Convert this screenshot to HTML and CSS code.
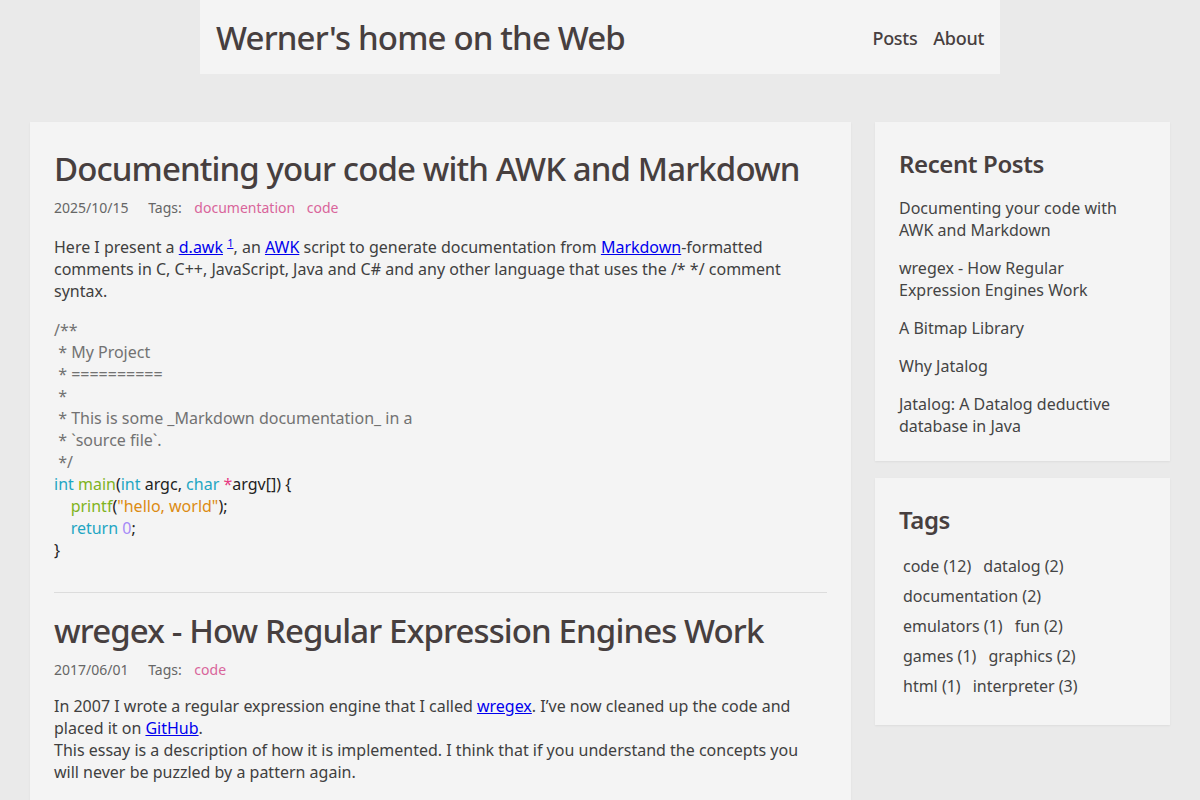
FILE: index.html
```html
<!DOCTYPE html>
<html lang="en">
<head>
  <meta charset="UTF-8">
  <title>Werner's home on the Web</title>
  <link rel="stylesheet" href="styles.css">
</head>
<body>
<header class="site-header">
  <a href="/" class="site-title">Werner's home on the Web</a>
  <nav class="site-nav">
    <a href="/posts">Posts</a>
    <a href="/about">About</a>
  </nav>
</header>

<div class="layout">
  <main class="card posts">
    <article class="post">
      <h1>Documenting your code with AWK and Markdown</h1>
      <div class="meta">
        <span class="date">2025/10/15</span>
        <span class="tags-label">Tags:</span>
        <a href="#" class="tag">documentation</a>
        <a href="#" class="tag">code</a>
      </div>
      <p>Here I present a <a href="#">d.awk</a> <sup><a href="#">1</a></sup>, an <a href="#">AWK</a> script to generate documentation from <a href="#">Markdown</a>-formatted comments in C, C++, JavaScript, Java and C# and any other language that uses the /* */ comment syntax.</p>
<pre class="code"><span class="c">/**
 * My Project
 * ==========
 *
 * This is some _Markdown documentation_ in a
 * `source file`.
 */</span>
<span class="k">int</span> <span class="f">main</span>(<span class="k">int</span> argc, <span class="k">char</span> <span class="o">*</span>argv[]) {
    <span class="f">printf</span>(<span class="s">"hello, world"</span>);
    <span class="k">return</span> <span class="n">0</span>;
}</pre>
    </article>
    <hr>
    <article class="post">
      <h1>wregex - How Regular Expression Engines Work</h1>
      <div class="meta">
        <span class="date">2017/06/01</span>
        <span class="tags-label">Tags:</span>
        <a href="#" class="tag">code</a>
      </div>
      <p>In 2007 I wrote a regular expression engine that I called <a href="#">wregex</a>. I’ve now cleaned up the code and placed it on <a href="#">GitHub</a>.<br>
      This essay is a description of how it is implemented. I think that if you understand the concepts you will never be puzzled by a pattern again.</p>
    </article>
    <hr>
  </main>

  <aside class="sidebar">
    <section class="card widget">
      <h2>Recent Posts</h2>
      <ul class="recent">
        <li><a href="#">Documenting your code with AWK and Markdown</a></li>
        <li><a href="#">wregex - How Regular Expression Engines Work</a></li>
        <li><a href="#">A Bitmap Library</a></li>
        <li><a href="#">Why Jatalog</a></li>
        <li><a href="#">Jatalog: A Datalog deductive database in Java</a></li>
      </ul>
    </section>
    <section class="card widget">
      <h2>Tags</h2>
      <div class="tag-cloud">
        <a href="#">code (12)</a>
        <a href="#">datalog (2)</a>
        <a href="#">documentation (2)</a>
        <a href="#">emulators (1)</a>
        <a href="#">fun (2)</a>
        <a href="#">games (1)</a>
        <a href="#">graphics (2)</a>
        <a href="#">html (1)</a>
        <a href="#">interpreter (3)</a>
      </div>
    </section>
  </aside>
</div>
</body>
</html>
```

FILE: styles.css
```css
body {
  font-family: "Noto Sans", "Open Sans", sans-serif;
  font-size: 16px;
  line-height: 22px;
  color: #404040;
  margin: 0;
  padding: 0;
  background-color: #eaeaea;
}
a {
  color: #0000ee;
}
.site-header {
  width: 800px;
  height: 74px;
  margin: 0 auto;
  padding: 0 16px;
  box-sizing: border-box;
  display: flex;
  align-items: center;
  justify-content: space-between;
  background-color: #f4f4f4;
}
.site-title {
  font-size: 33px;
  line-height: 40px;
  font-weight: 500;
  letter-spacing: -0.85px;
  color: #473f3f;
  text-decoration: none;
  padding-top: 2px;
}
.site-nav {
  display: flex;
  gap: 16px;
  padding-top: 2px;
}
.site-nav a {
  font-size: 18px;
  font-weight: 500;
  letter-spacing: -0.3px;
  color: #473f3f;
  text-decoration: none;
}
.layout {
  display: grid;
  grid-template-columns: 821px 295px;
  gap: 24px;
  margin: 48px 30px 0;
  align-items: start;
}
.card {
  background-color: #f4f4f4;
  box-shadow: 0 1px 2px rgba(0, 0, 0, 0.06);
  padding: 24px;
}
.posts {
  padding-bottom: 0;
}
.post h1 {
  font-size: 33px;
  line-height: 40px;
  font-weight: 500;
  letter-spacing: -0.9px;
  color: #473f3f;
  margin: 3px 0 9px;
}
.meta {
  font-size: 14px;
  line-height: 20px;
  color: #666;
}
.meta .tags-label {
  margin-left: 16px;
  margin-right: 9px;
}
.meta .tag {
  color: #d9659b;
  text-decoration: none;
  margin-right: 8px;
}
.post p {
  margin: 15px 0 0;
}
sup {
  font-size: 11px;
  line-height: 20px;
  vertical-align: 6px;
}
.code {
  font-family: "Noto Sans", "Open Sans", sans-serif;
  font-size: 16px;
  line-height: 22px;
  color: #222;
  margin: 17px 0 0;
  white-space: pre;
}
.code .c { color: #727272; }
.code .k { color: #1fa6c3; }
.code .f { color: #7fb321; }
.code .o { color: #e73b82; }
.code .s { color: #dc8b12; }
.code .n { color: #a68af7; }
hr {
  border: none;
  border-top: 1px solid #dcdcdc;
  margin: 31px 0 18px;
}
.sidebar {
  display: flex;
  flex-direction: column;
  gap: 17px;
}
.widget h2 {
  font-size: 24px;
  line-height: 30px;
  font-weight: 600;
  letter-spacing: -0.4px;
  color: #473f3f;
  margin: 3px 0 0;
}
.recent {
  list-style: none;
  margin: 18px 0 0;
  padding: 0;
}
.recent li {
  margin-bottom: 16px;
}
.recent li:last-child {
  margin-bottom: 0;
}
.recent a,
.tag-cloud a {
  color: #444;
  text-decoration: none;
}
.tag-cloud {
  display: flex;
  flex-wrap: wrap;
  column-gap: 4px;
  margin-top: 16px;
}
.tag-cloud a {
  padding: 4px;
}
```
